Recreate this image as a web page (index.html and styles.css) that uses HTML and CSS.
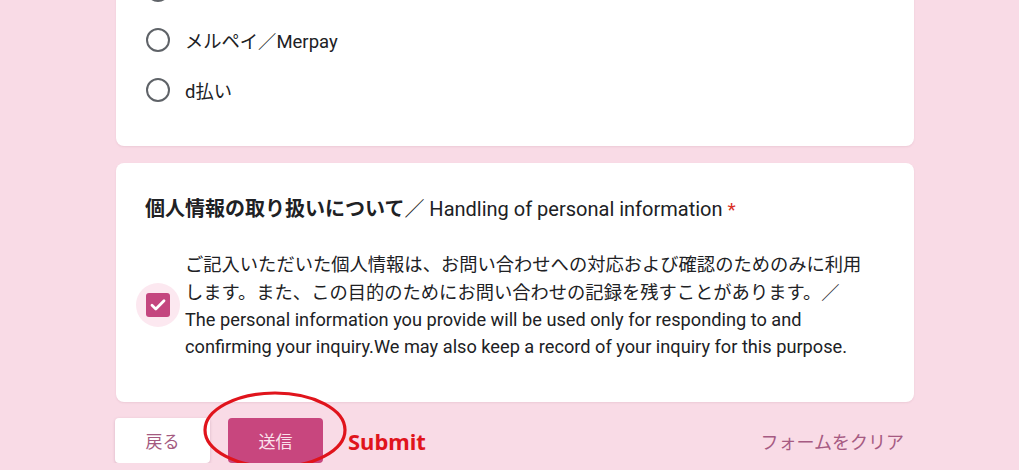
FILE: index.html
```html
<!DOCTYPE html>
<html lang="ja">
<head>
    <meta charset="UTF-8">
    <meta name="viewport" content="width=device-width, initial-scale=1.0">
    <title>お問い合わせフォーム</title>
    <link rel="stylesheet" href="styles.css">
</head>
<body>

    <div class="form-wrap">
        <div class="card card-choices">
            <div class="choice"><span class="radio"></span><span class="choice-label">PayPay</span></div>
            <div class="choice"><span class="radio"></span><span class="choice-label"><span class="ja">メルペイ／</span>Merpay</span></div>
            <div class="choice"><span class="radio"></span><span class="choice-label">d<span class="ja">払い</span></span></div>
        </div>

        <div class="card card-privacy">
            <div class="question-title">
                <span class="ja-bold">個人情報の取り扱いについて</span><span class="ja-slash">／</span> Handling of personal information <span class="required">*</span>
            </div>

            <div class="agree-row">
                <div class="check-halo">
                    <span class="check-box">
                        <svg width="20" height="20" viewBox="0 0 20 20"><path d="M4 10.3l3.8 3.6L16 5.8" fill="none" stroke="#fff" stroke-width="2.8" stroke-linecap="round" stroke-linejoin="round"/></svg>
                    </span>
                </div>
                <p class="agree-text">
                    <span class="ja">ご記入いただいた個人情報は、お問い合わせへの対応および確認のためのみに利用します。また、この目的のためにお問い合わせの記録を残すことがあります。／</span><br>
                    The personal information you provide will be used only for responding to and confirming your inquiry.We may also keep a record of your inquiry for this purpose.
                </p>
            </div>
        </div>

        <div class="form-footer">
            <button class="btn btn-back" type="button">戻る</button>
            <div class="submit-area">
                <button class="btn btn-submit" type="submit">送信</button>
                <!-- 注釈の赤丸 -->
                <svg class="note-circle" width="146" height="78" viewBox="0 0 146 78">
                    <ellipse cx="72" cy="39" rx="70" ry="37" fill="none" stroke="#e0141c" stroke-width="3.2"/>
                </svg>
                <span class="note-label">Submit</span>
            </div>
            <a class="clear-link" href="#">フォームをクリア</a>
        </div>
    </div>

</body>
</html>
```

FILE: styles.css
```css
body {
    font-family: 'Roboto', 'Noto Sans CJK JP', sans-serif;
    margin: 0;
    background-color: #f9dbe6;
    color: #202124;
    overflow: hidden;
}

.form-wrap {
    width: 798px;
    margin-left: 116px;
}

.card {
    background-color: #fff;
    border-radius: 8px;
    box-shadow: 0 1px 2px rgba(150, 80, 110, 0.12);
}

.card-choices {
    margin-top: -35px;
    padding: 0 24px 31px 30px;
}

.choice {
    display: flex;
    align-items: center;
    height: 50px;
}

.radio {
    width: 20px;
    height: 20px;
    border: 2px solid #5f6368;
    border-radius: 50%;
    flex-shrink: 0;
}

.choice-label {
    margin-left: 15px;
    font-size: 18.5px;
    color: #202124;
}

.ja {
    font-family: 'Noto Sans CJK JP', sans-serif;
    font-size: 18.3px;
}

.card-privacy {
    margin-top: 17px;
    padding: 30px 24px 42px 29px;
}

.question-title {
    font-size: 20px;
    line-height: 30px;
    color: #202124;
}

.ja-bold {
    font-family: 'Noto Sans CJK JP', sans-serif;
    font-weight: 700;
    font-size: 20px;
}

.ja-slash {
    font-family: 'Noto Sans CJK JP', sans-serif;
    font-size: 20px;
}

.required {
    color: #d93025;
    font-size: 19px;
}

.agree-row {
    display: flex;
    align-items: center;
    margin-top: 25px;
}

.check-halo {
    width: 44px;
    height: 44px;
    margin-left: -9px;
    border-radius: 50%;
    background-color: #fce8f0;
    display: flex;
    align-items: center;
    justify-content: center;
    flex-shrink: 0;
}

.check-box {
    width: 24px;
    height: 24px;
    border-radius: 3px;
    background-color: #c4467f;
    display: flex;
    align-items: center;
    justify-content: center;
}

.agree-text {
    margin: 0 0 0 5px;
    width: 685px;
    font-size: 18.2px;
    line-height: 27px;
    color: #202124;
}

.form-footer {
    display: flex;
    align-items: center;
    margin-top: 16px;
    margin-left: -1px;
}

.btn {
    width: 95px;
    height: 45px;
    border: none;
    border-radius: 4px;
    font-family: 'Noto Sans CJK JP', sans-serif;
    font-size: 17px;
    cursor: pointer;
}

.btn-back {
    background-color: #fff;
    color: #a45a80;
    box-shadow: 0 1px 3px rgba(120, 60, 90, 0.25);
}

.submit-area {
    position: relative;
    display: flex;
    align-items: center;
    margin-left: 18px;
}

.btn-submit {
    background-color: #c8467e;
    color: #fbe3ec;
}

.note-circle {
    position: absolute;
    left: -25px;
    top: -27px;
}

.note-label {
    margin-left: 25px;
    font-family: 'Noto Sans', sans-serif;
    font-weight: 700;
    font-size: 22px;
    color: #e0141c;
}

.clear-link {
    margin-left: auto;
    margin-right: 10px;
    font-family: 'Noto Sans CJK JP', sans-serif;
    font-size: 18px;
    color: #a65a82;
    text-decoration: none;
}
```
